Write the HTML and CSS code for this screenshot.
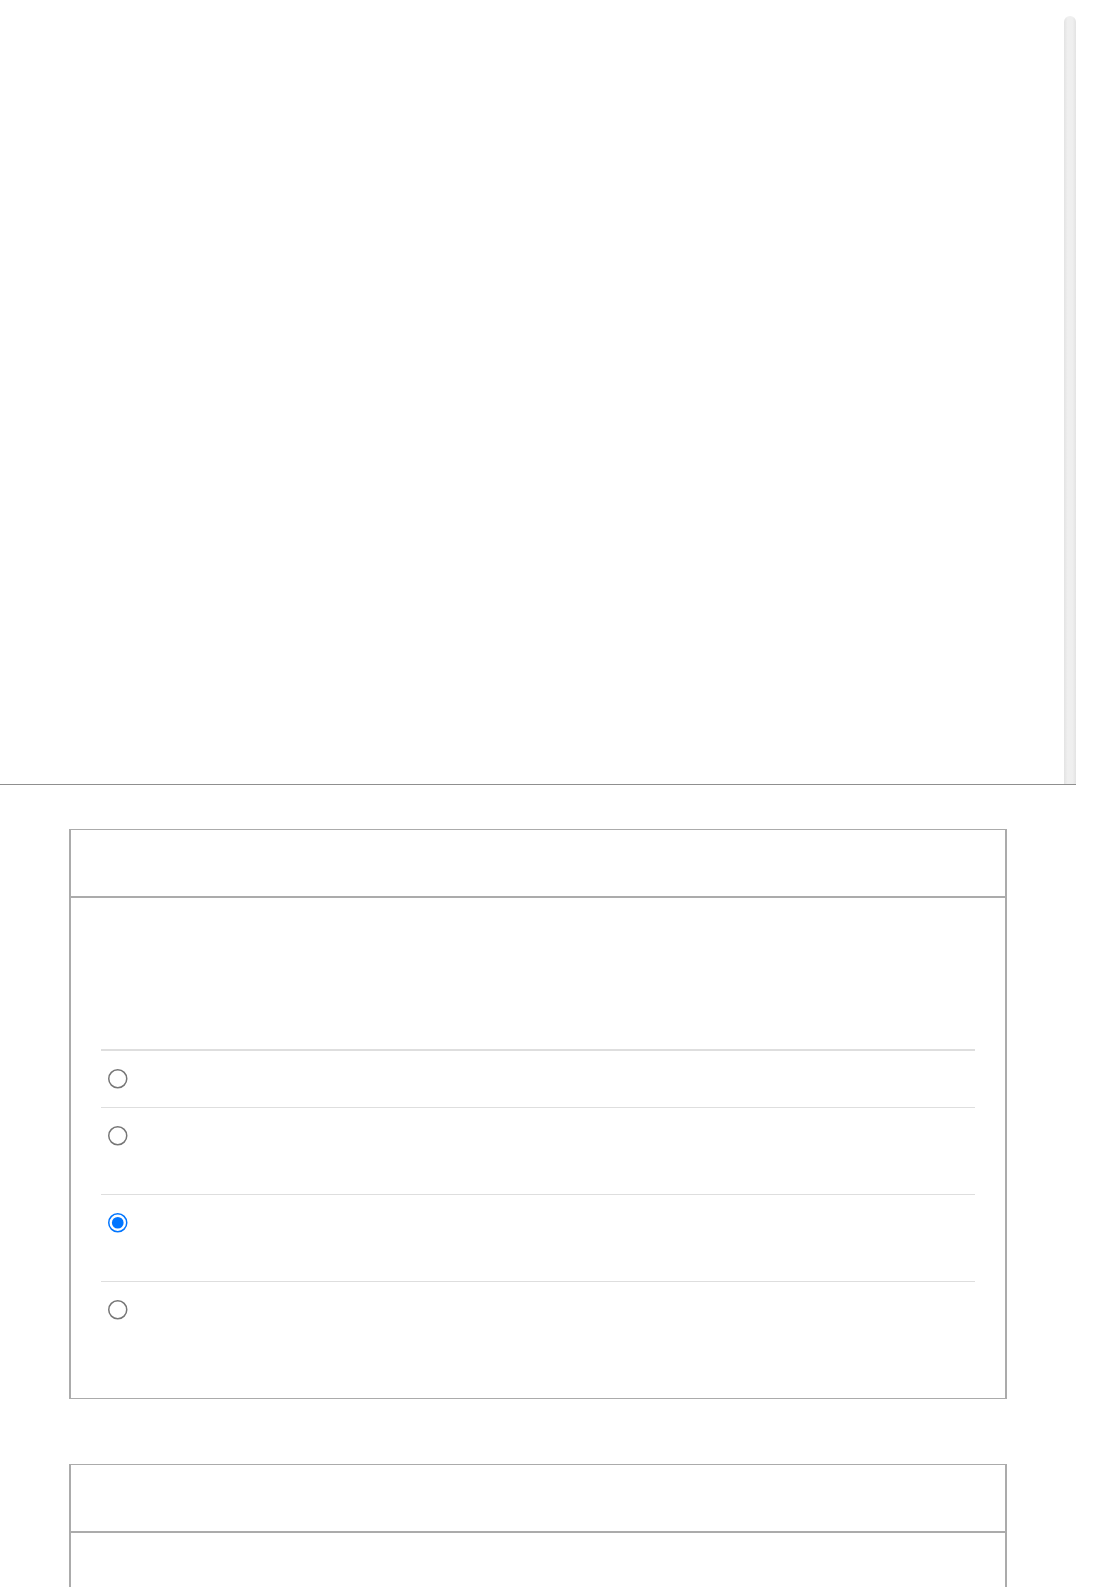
FILE: index.html
```html
<!DOCTYPE html>
<html lang="en">
<head>
<meta charset="utf-8">
<title>Form</title>
<link rel="stylesheet" href="styles.css">
</head>
<body>
<div class="frame">
  <div class="frame-content"></div>
  <div class="scrollbar"></div>
</div>
<main class="cards">
  <section class="card">
    <div class="card-header"></div>
    <div class="card-body">
      <ul class="choices">
        <li class="choice choice-short"><input class="radio" type="radio" name="q1"></li>
        <li class="choice"><input class="radio" type="radio" name="q1"></li>
        <li class="choice"><input class="radio" type="radio" name="q1" checked></li>
        <li class="choice choice-last"><input class="radio" type="radio" name="q1"></li>
      </ul>
    </div>
  </section>
  <section class="card card-second">
    <div class="card-header"></div>
    <div class="card-body card-body-tall"></div>
  </section>
</main>
</body>
</html>
```
FILE: styles.css
```css
html, body {
  margin: 0;
  padding: 0;
  background: #ffffff;
  font-family: "Liberation Sans", Arial, sans-serif;
}

.frame {
  display: flex;
  width: 1076px;
  height: 785px;
  box-sizing: border-box;
  border-bottom: 1px solid #8f8f8f;
}

.frame-content {
  flex: 1;
}

.scrollbar {
  width: 12px;
  margin-top: 16px;
  border-radius: 6px 6px 0 0;
  background: linear-gradient(to right, #e3e3e3 0%, #efefef 30%, #efefef 70%, #e3e3e3 100%);
}

.cards {
  padding-top: 44px;
  padding-left: 69px;
}

.card {
  width: 938px;
  box-sizing: border-box;
  border-style: solid;
  border-color: #ababab;
  border-width: 1px 2px 1px 2px;
  background: #ffffff;
}

.card-second {
  margin-top: 65px;
}

.card-header {
  height: 66px;
  border-bottom: 2px solid #ababab;
}

.card-body {
  padding: 151px 30px 30px 30px;
}

.card-body-tall {
  padding: 0;
  height: 300px;
}

.choices {
  list-style: none;
  margin: 0;
  padding: 0;
  border-top: 2px solid #dedede;
}

.choice {
  display: flex;
  align-items: flex-start;
  height: 86px;
  padding-left: 7px;
  border-bottom: 1px solid #dedede;
}

.choice-short {
  height: 56px;
}

.choice-last {
  border-bottom: none;
}

.radio {
  margin: 12px 0 0 0;
  zoom: 1.5;
  accent-color: #0075ff;
}
```
